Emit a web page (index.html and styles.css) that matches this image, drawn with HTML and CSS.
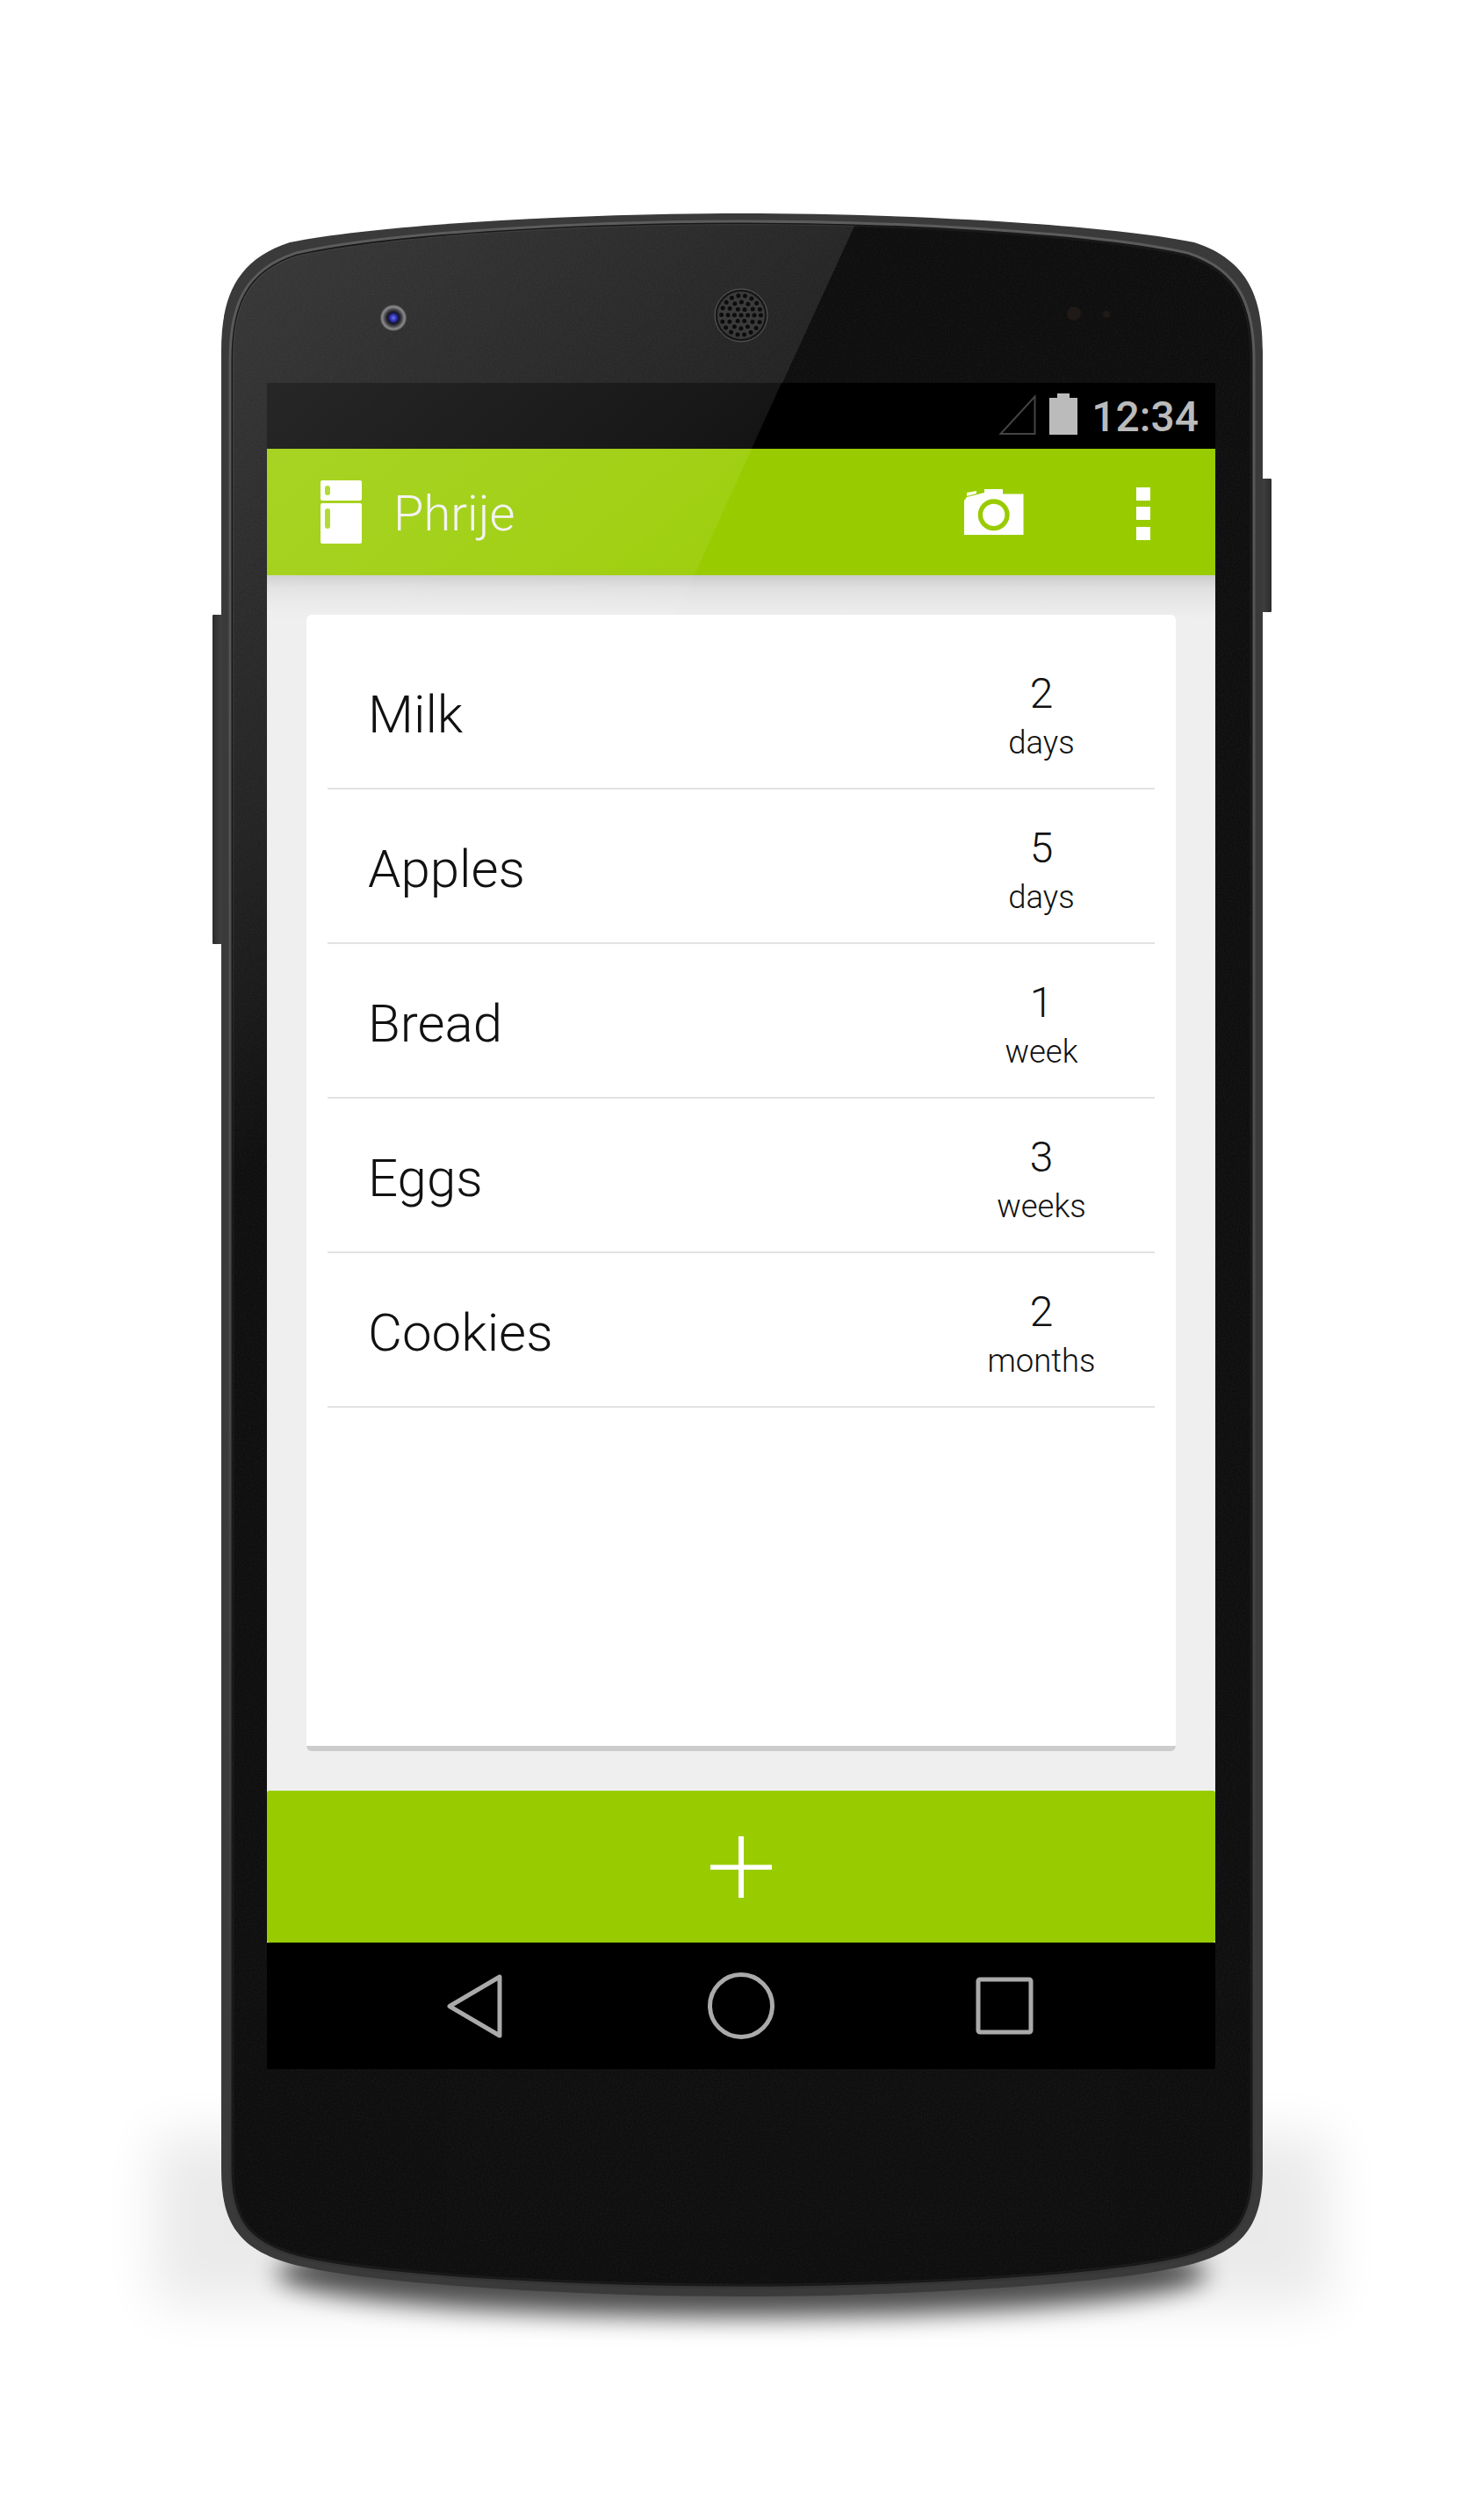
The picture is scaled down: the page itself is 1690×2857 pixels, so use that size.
FILE: index.html
```html
<!DOCTYPE html>
<html lang="en">
<head>
  <meta charset="UTF-8">
  <meta name="viewport" content="width=device-width, initial-scale=1.0">
  <title>Phrije</title>
  <link rel="stylesheet" href="styles.css">
</head>
<body>

<div class="stage">

  <!-- phone body, drawn behind the screen -->
  <svg class="chassis" width="1690" height="2857" viewBox="0 0 1690 2857">
    <defs>
      <filter id="blurWide" x="-20%" y="-50%" width="140%" height="200%"><feGaussianBlur stdDeviation="30"/></filter>
      <filter id="blurNear" x="-10%" y="-50%" width="120%" height="200%"><feGaussianBlur stdDeviation="14"/></filter>
      <filter id="grain" x="0" y="0" width="100%" height="100%">
        <feTurbulence type="fractalNoise" baseFrequency="0.55" numOctaves="2" seed="4"/>
        <feColorMatrix values="0 0 0 0 1  0 0 0 0 1  0 0 0 0 1  0 0 0 0.22 -0.06"/>
      </filter>
      <linearGradient id="band" x1="0" y1="0" x2="0" y2="1">
        <stop offset="0" stop-color="#5c5c5e"/>
        <stop offset="0.5" stop-color="#4c4c50"/>
        <stop offset="1" stop-color="#353535"/>
      </linearGradient>
      <linearGradient id="shine" gradientUnits="userSpaceOnUse" x1="300" y1="300" x2="800" y2="900">
        <stop offset="0" stop-color="#fff" stop-opacity="0.17"/>
        <stop offset="0.6" stop-color="#fff" stop-opacity="0.09"/>
        <stop offset="0.8" stop-color="#fff" stop-opacity="0.05"/>
        <stop offset="1" stop-color="#fff" stop-opacity="0"/>
      </linearGradient>
      <linearGradient id="keyLeft" x1="0" y1="0" x2="1" y2="0">
        <stop offset="0" stop-color="#2c2c2c"/>
        <stop offset="1" stop-color="#484848"/>
      </linearGradient>
      <linearGradient id="keyRight" x1="0" y1="0" x2="1" y2="0">
        <stop offset="0" stop-color="#484848"/>
        <stop offset="1" stop-color="#2c2c2c"/>
      </linearGradient>
      <radialGradient id="lens">
        <stop offset="0" stop-color="#6a74f0"/>
        <stop offset="0.25" stop-color="#2f2fb0"/>
        <stop offset="0.42" stop-color="#14142c"/>
        <stop offset="0.6" stop-color="#3a3a3e"/>
        <stop offset="0.85" stop-color="#8c8c8c"/>
        <stop offset="1" stop-color="#4a4a4a"/>
      </radialGradient>
      <clipPath id="faceClip">
        <path d="M265 410C265 350 280 310 338 291C450 266 680 255 845 255C1010 255 1240 266 1352 291C1410 310 1425 350 1425 410L1425 2470C1425 2525 1408 2555 1340 2570C1240 2592 1010 2602 845 2602C680 2602 450 2592 350 2570C282 2555 265 2525 265 2470Z"/>
      </clipPath>
    </defs>

    <rect x="175" y="2430" width="1340" height="195" fill="#000" opacity="0.08" filter="url(#blurWide)"/>
    <ellipse cx="845" cy="2588" rx="530" ry="50" fill="#000" opacity="0.68" filter="url(#blurNear)"/>

    <rect x="242" y="700" width="14" height="375" rx="1" fill="url(#keyLeft)"/>
    <rect x="1434" y="545" width="14" height="152" rx="1" fill="url(#keyRight)"/>

    <path fill="#3a3a3b" d="M252 400C252 340 268 296 330 276C440 254 680 243 845 243C1010 243 1250 254 1360 276C1422 296 1438 340 1438 400L1438 2470C1438 2530 1420 2565 1345 2581C1250 2603 1010 2615 845 2615C680 2615 440 2603 345 2581C270 2565 252 2530 252 2470Z"/>

    <g fill="#0e0e0e" stroke-linejoin="round">
      <path stroke="url(#band)" stroke-width="9" d="M265 410C265 350 280 310 338 291C450 266 680 255 845 255C1010 255 1240 266 1352 291C1410 310 1425 350 1425 410L1425 2470C1425 2525 1408 2555 1340 2570C1240 2592 1010 2602 845 2602C680 2602 450 2592 350 2570C282 2555 265 2525 265 2470Z"/>
      <path stroke="#181818" stroke-width="3" d="M265 410C265 350 280 310 338 291C450 266 680 255 845 255C1010 255 1240 266 1352 291C1410 310 1425 350 1425 410L1425 2470C1425 2525 1408 2555 1340 2570C1240 2592 1010 2602 845 2602C680 2602 450 2592 350 2570C282 2555 265 2525 265 2470Z"/>
    </g>

    <g clip-path="url(#faceClip)">
      <polygon points="981,240 448,1400 240,1400 240,240" fill="url(#shine)"/>
      <rect x="252" y="243" width="1186" height="2372" filter="url(#grain)" opacity="0.3"/>
    </g>

    <!-- front camera -->
    <circle cx="448" cy="362" r="15" fill="url(#lens)"/>

    <!-- earpiece -->
    <circle cx="844" cy="359" r="28" fill="#3a3a3a" stroke="#161616" stroke-width="2"/>
    <circle cx="844" cy="359" r="30" fill="none" stroke="#5a5a5a" stroke-width="1"/>
    <g fill="none" stroke="#0c0c0c" stroke-width="5" stroke-linecap="round">
      <circle cx="844" cy="359" r="0.1" stroke-dasharray="0 1"/>
      <circle cx="844" cy="359" r="7.6" stroke-dasharray="0 7.96"/>
      <circle cx="844" cy="359" r="15" stroke-dasharray="0 7.85"/>
      <circle cx="844" cy="359" r="22.4" stroke-dasharray="0 7.82"/>
    </g>

    <!-- sensors -->
    <circle cx="1223" cy="357" r="8" fill="#1f1a18"/>
    <circle cx="1260" cy="358" r="4" fill="#1f1a18"/>
  </svg>

  <div class="screen">
    <div class="status-bar">
      <svg class="signal" width="43" height="47" viewBox="0 0 43 47"><path d="M41.5 3.5V46H2.5Z" fill="none" stroke="#444" stroke-width="2"/></svg>
      <svg class="battery" width="32" height="47" viewBox="0 0 32 47"><path d="M9 0H23V5H32V47H0V5H9Z" fill="#bbb"/></svg>
      <span class="clock">12:34</span>
    </div>

    <div class="app-bar">
      <svg class="fridge" width="47" height="72" viewBox="0 0 47 72">
        <rect width="47" height="23" rx="2" fill="#fff"/>
        <rect y="26" width="47" height="46" rx="2" fill="#fff"/>
        <rect x="5" y="6" width="6" height="11" rx="3" fill="#a7d61c"/>
        <rect x="5" y="32" width="6" height="23" rx="3" fill="#a7d61c"/>
      </svg>
      <span class="app-title">Phrije</span>
      <svg class="camera" width="68" height="52" viewBox="0 0 68 52">
        <path d="M0 52V13L3 9L23 4V0H44V5.5H67.500V52Z" fill="#fff"/>
        <path d="M3 4L14 2V5L3 8Z" fill="#fff"/>
        <circle cx="33.700" cy="29.300" r="15.300" fill="none" stroke="#99cc00" stroke-width="5.300"/>
      </svg>
      <svg class="more" width="16" height="60" viewBox="0 0 16 60">
        <rect width="16" height="15" fill="#fff"/>
        <rect y="22" width="16" height="15" fill="#fff"/>
        <rect y="45" width="16" height="15" fill="#fff"/>
      </svg>
    </div>

    <div class="content">
      <div class="card">
        <div class="row">
          <span class="item-name">Milk</span>
          <div class="age"><span class="age-num">2</span><span class="age-unit">days</span></div>
        </div>
        <div class="row">
          <span class="item-name">Apples</span>
          <div class="age"><span class="age-num">5</span><span class="age-unit">days</span></div>
        </div>
        <div class="row">
          <span class="item-name">Bread</span>
          <div class="age"><span class="age-num">1</span><span class="age-unit">week</span></div>
        </div>
        <div class="row">
          <span class="item-name">Eggs</span>
          <div class="age"><span class="age-num">3</span><span class="age-unit">weeks</span></div>
        </div>
        <div class="row">
          <span class="item-name">Cookies</span>
          <div class="age"><span class="age-num">2</span><span class="age-unit">months</span></div>
        </div>
      </div>
    </div>

    <div class="add-button">
      <svg width="70" height="70" viewBox="0 0 70 70">
        <rect x="32" width="6" height="70" fill="#fff"/>
        <rect y="32.500" width="70" height="5.500" fill="#fff"/>
      </svg>
    </div>

    <div class="nav-bar">
      <svg class="nav-back" width="64" height="73" viewBox="0 0 64 73" fill="none" stroke="#aaa" stroke-width="5" stroke-linejoin="round"><path d="M3 36.500L60 3V70Z"/></svg>
      <svg class="nav-home" width="76" height="76" viewBox="0 0 76 76" fill="none" stroke="#aaa" stroke-width="5"><circle cx="38" cy="38" r="35.500"/></svg>
      <svg class="nav-recent" width="66" height="66" viewBox="0 0 66 66" fill="none" stroke="#aaa" stroke-width="5" stroke-linejoin="round"><rect x="3" y="3" width="60" height="60" rx="2"/></svg>
    </div>
  </div>

  <!-- glass reflection over the top of the screen -->
  <svg class="glare" width="1080" height="264" viewBox="304 436 1080 264">
    <polygon points="890,436 770,700 304,700 304,436" fill="url(#shine)"/>
  </svg>

</div>

</body>
</html>
```

FILE: styles.css
```css
* { box-sizing: border-box; }
body { margin: 0; background-color: #fff; font-family: Roboto, "Liberation Sans", sans-serif; }

.stage { position: relative; width: 1690px; height: 2857px; padding: 436px 0 0 304px; overflow: hidden; }
.chassis { position: absolute; left: 0; top: 0; }
.glare { position: absolute; left: 304px; top: 436px; pointer-events: none; }

.screen { position: relative; width: 1080px; height: 1920px; display: flex; flex-direction: column; background-color: #efefef; }

.status-bar { height: 75px; background-color: #000; display: flex; justify-content: flex-end; padding: 12px 19px 0 0; }
.signal { margin-right: 15px; }
.battery { margin-right: 16px; }
.clock { color: #bbb; font-size: 48px; line-height: 54px; font-weight: 500; }

.app-bar { height: 144px; background-color: #99cc00; display: flex; align-items: center; padding: 0 74px 0 61px; }
.app-title { color: #f2f2f2; font-size: 56px; font-weight: 300; margin: 4px 0 0 36px; }
.camera { margin-left: auto; margin-right: 128px; }
.more { margin-top: 4px; }

.content { flex: 1; min-height: 0; padding: 45px; background-image: linear-gradient(#cbcbcb, #dfdfdf 14px, #e6e6e6 26px, #efefef 50px); }

.card { height: 100%; background-color: #fff; border-radius: 6px; border-bottom: 6px solid #ccc; padding: 23px 24px 0; }
.row { height: 176px; border-bottom: 2px solid #e2e2e2; display: flex; align-items: center; justify-content: space-between; padding: 0 29px 0 46px; }
.item-name { font-size: 60px; font-weight: 300; color: #111; margin-top: 6px; }
.age { width: 200px; display: flex; flex-direction: column; align-items: center; padding-top: 15px; color: #111; font-weight: 300; }
.age-num { font-size: 48px; line-height: 52px; }
.age-unit { font-size: 36.5px; line-height: 52px; margin-top: 4px; }

.add-button { height: 173px; background-color: #99cc00; border-radius: 3px; display: flex; align-items: center; justify-content: center; }

.nav-bar { height: 144px; background-color: #000; display: flex; align-items: center; padding-left: 205px; }
.nav-back { margin-right: 233px; }
.nav-recent { margin-left: 229px; }
```
